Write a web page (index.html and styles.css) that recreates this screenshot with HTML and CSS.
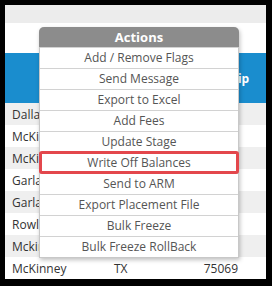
FILE: index.html
```html
<!DOCTYPE html>
<html lang="en">
<head>
    <meta charset="UTF-8">
    <title>Accounts - Actions</title>
    <link rel="stylesheet" href="styles.css">
</head>
<body>
    <div class="frame">
        <div class="toolbar"></div>
        <div class="spacer"></div>

        <div class="grid">
            <div class="grid-head">
                <span class="col-city">City</span>
                <span class="col-state">State</span>
                <span class="col-zip">Zip</span>
            </div>
            <div class="grid-row alt"><span class="col-city">Dallas</span><span class="col-state">TX</span><span class="col-zip">75201</span></div>
            <div class="grid-row"><span class="col-city">McKinney</span><span class="col-state">TX</span><span class="col-zip">75069</span></div>
            <div class="grid-row alt"><span class="col-city">McKinney</span><span class="col-state">TX</span><span class="col-zip">75070</span></div>
            <div class="grid-row"><span class="col-city">Garland</span><span class="col-state">TX</span><span class="col-zip">75040</span></div>
            <div class="grid-row alt"><span class="col-city">Garland</span><span class="col-state">TX</span><span class="col-zip">75043</span></div>
            <div class="grid-row"><span class="col-city">Rowlett</span><span class="col-state">TX</span><span class="col-zip">75088</span></div>
            <div class="grid-row alt"><span class="col-city">Mckinney</span><span class="col-state">TX</span><span class="col-zip">75071</span></div>
            <div class="grid-row"><span class="col-city">McKinney</span><span class="col-state">TX</span><span class="col-zip">75069</span></div>
        </div>

        <div class="actions-menu">
            <div class="actions-title">Actions</div>
            <div class="actions-item">Add / Remove Flags</div>
            <div class="actions-item">Send Message</div>
            <div class="actions-item">Export to Excel</div>
            <div class="actions-item">Add Fees</div>
            <div class="actions-item">Update Stage</div>
            <div class="actions-item highlight">Write Off Balances</div>
            <div class="actions-item">Send to ARM</div>
            <div class="actions-item">Export Placement File</div>
            <div class="actions-item">Bulk Freeze</div>
            <div class="actions-item">Bulk Freeze RollBack</div>
        </div>
    </div>
</body>
</html>
```

FILE: styles.css
```css
* {
    margin: 0;
    padding: 0;
    box-sizing: border-box;
}

body {
    font-family: 'Open Sans', 'Noto Sans', sans-serif;
    background: #000;
    width: 272px;
    height: 286px;
    padding: 5px 6px 7px 5px;
    overflow: hidden;
}

.frame {
    position: relative;
    background: #fff;
    height: 100%;
    overflow: hidden;
}

.toolbar {
    height: 18px;
    background: #ececec;
}

.spacer {
    height: 30px;
}

.grid-head {
    display: flex;
    align-items: center;
    height: 50px;
    background: #1a8dce;
    color: #fff;
    font-weight: bold;
    font-size: 12px;
}

.grid-row {
    display: flex;
    align-items: center;
    height: 22px;
    font-size: 12px;
    color: #333;
}

.grid-row.alt {
    background: #efefef;
}

.col-city {
    width: 102px;
    padding-left: 7px;
}

.col-state {
    width: 96px;
    padding-left: 7px;
}

.col-zip {
    width: 35px;
    text-align: right;
}

.grid-head .col-city {
    padding-left: 40px;
}

.grid-head .col-zip {
    text-align: left;
    padding-left: 28px;
    width: 60px;
}

.actions-menu {
    position: absolute;
    left: 34px;
    top: 22px;
    width: 200px;
    background: #fff;
    border: 1px solid #c8c8c8;
    border-top: none;
    border-radius: 5px 5px 0 0;
    box-shadow: 1px 2px 4px rgba(0, 0, 0, 0.25);
    font-size: 12px;
    color: #555;
}

.actions-title {
    height: 20px;
    line-height: 20px;
    margin: 0 -1px;
    background: #8c8c8c;
    color: #fff;
    font-weight: bold;
    font-size: 13px;
    text-align: center;
    border-radius: 5px 5px 0 0;
}

.actions-item {
    height: 21px;
    line-height: 20px;
    text-align: center;
    border-top: 1px solid #d2d2d2;
}

.actions-item:first-of-type {
    border-top: none;
}

.actions-item.highlight {
    outline: 3px solid #e3474c;
    outline-offset: -2px;
    border-radius: 2px;
}
```
